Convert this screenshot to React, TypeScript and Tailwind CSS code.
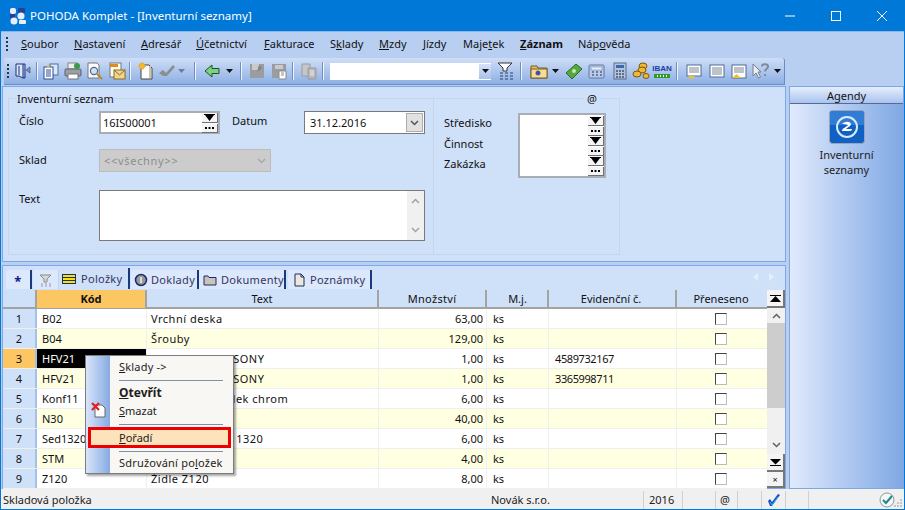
import React from "react";

const rows = [
  ["1", "B02", "Vrchní deska", "63,00", "ks", ""],
  ["2", "B04", "Šrouby", "129,00", "ks", ""],
  ["3", "HFV21", "Hi-Fi soustava SONY", "1,00", "ks", "4589732167"],
  ["4", "HFV21", "Hi-Fi soustava SONY", "1,00", "ks", "3365998711"],
  ["5", "Konf11", "Konferenč. stolek chrom", "6,00", "ks", ""],
  ["6", "N30", "Noha 30", "40,00", "ks", ""],
  ["7", "Sed1320", "Sedací sestava 1320", "6,00", "ks", ""],
  ["8", "STM", "Stůl", "4,00", "ks", ""],
  ["9", "Z120", "Židle Z120", "8,00", "ks", ""],
];

const menu = [
  ["w-[53px]", "S", "oubor", ""],
  ["w-[67px]", "N", "astavení", ""],
  ["w-[55px]", "A", "dresář", ""],
  ["w-[68px]", "Ú", "četnictví", ""],
  ["w-[66px]", "F", "akturace", ""],
  ["w-[49px]", "S", "klady", "k"],
  ["w-[44px]", "M", "zdy", ""],
  ["w-[40px]", "J", "ízdy", ""],
  ["w-[57px]", "Maje", "ek", "t"],
  ["w-[58px]", "Z", "áznam", "b"],
  ["w-[60px]", "Náp", "věda", "o"],
];

const Caret = ({ className = "" }: { className?: string }) => (
  <svg width="7" height="4" viewBox="0 0 7 4" className={className}>
    <path d="M0 0h7L3.500 4z" fill="#111" />
  </svg>
);

const Sep = ({ className = "" }: { className?: string }) => (
  <div className={`w-[2px] h-[18px] border-l border-[#6f8fc4] bg-white/80 ${className}`} />
);

const Ic = ({ className = "", children }: { className?: string; children: React.ReactNode }) => (
  <svg width="18" height="18" viewBox="0 0 18 18" className={`shrink-0 ${className}`}>
    {children}
  </svg>
);

const Toolbar = () => (
  <div className="ml-[3px] w-[781px] h-[27px] flex items-center rounded-t-[3px] bg-gradient-to-b from-[#cfdef7] to-[#8eafe3] border-b border-r border-[#6c8cc4]">
    <div className="ml-[3px] w-[3px] h-[14px] border-l-2 border-dotted border-[#26364f]" />
    <Ic className="ml-[4px]">
      <path d="M2 2h7v14l-4-2H2z" fill="#dbe6f8" stroke="#1c2f7a" />
      <path d="M5 4v9M9 2h2v14H9" fill="none" stroke="#1c2f7a" />
      <path d="M12 8l4-3v6z" fill="#6f8fd6" stroke="#445" strokeWidth=".6" />
    </Ic>
    <Sep className="ml-[4px]" />
    <Ic className="ml-[4px]">
      <rect x="8" y="2" width="8" height="11" fill="#dce8f8" stroke="#4a6fa8" />
      <rect x="2" y="5" width="9" height="12" fill="#fff" stroke="#2b4f96" />
      <path d="M4 8h5M4 10h5M4 12h5M4 14h5" stroke="#2b4f96" />
      <path d="M6 2l2 3-3 1z" fill="#f2c230" />
    </Ic>
    <Ic className="ml-[4px]">
      <rect x="4" y="1" width="9" height="6" fill="#eee" stroke="#888" />
      <rect x="1" y="7" width="16" height="7" rx="1" fill="#9a9fa6" stroke="#5c6066" />
      <rect x="4" y="12" width="10" height="5" fill="#fff" stroke="#777" />
      <circle cx="13" cy="4" r="3" fill="#3b9a4a" />
    </Ic>
    <Ic className="ml-[4px]">
      <path d="M2 1h9l2 2v13H2z" fill="#fff" stroke="#777" />
      <circle cx="8" cy="9" r="3.600" fill="#cfe0f5" stroke="#54658a" strokeWidth="1.200" />
      <path d="M11 12l5 5" stroke="#b88a20" strokeWidth="2" />
    </Ic>
    <Ic className="ml-[4px]">
      <rect x="2" y="1" width="11" height="14" fill="#fdfdf0" stroke="#777" />
      <rect x="2" y="2" width="8" height="3" fill="#e08a20" />
      <rect x="6" y="8" width="11" height="9" fill="#f1d58b" stroke="#8a6a20" />
      <path d="M6 8l5.500 5L17 8" fill="none" stroke="#8a6a20" />
    </Ic>
    <Sep className="ml-[3px]" />
    <Ic className="ml-[6px]">
      <path d="M4 3h8l3 3v11H4z" fill="#fff" stroke="#444" />
      <path d="M13 4v12" stroke="#c9c6a8" strokeWidth="2" />
      <circle cx="5" cy="4" r="3" fill="#f3b82d" stroke="#e88a1a" strokeDasharray="1 1" />
    </Ic>
    <Ic className="ml-[3px]">
      <path d="M1 11l4-3 3 3 7-8 2 2-8 9H5z" fill="#8c8e92" />
    </Ic>
    <Caret className="ml-[2px] opacity-40" />
    <Sep className="ml-[9px]" />
    <Ic className="ml-[7px]">
      <path d="M2 9l7-6v3.500h7v5H9V15z" fill="#7fd07f" stroke="#14552a" />
    </Ic>
    <Caret className="ml-[5px]" />
    <Sep className="ml-[7px]" />
    <Ic className="ml-[6px]">
      <path d="M2 2h14v14H2z" fill="#9a9c9f" />
      <path d="M4 2h7v6H4z" fill="#c9cacc" />
      <path d="M11 3l3 3-5 4z" fill="#808285" />
    </Ic>
    <Ic className="ml-[4px]">
      <path d="M2 2h14v14H2z" fill="#9a9c9f" />
      <path d="M5 3h8v4H5z" fill="#c9cacc" />
      <path d="M9 9h7v8H9z" fill="#fff" stroke="#8a8c8f" />
      <path d="M11 11h3M11 13h3" stroke="#8a8c8f" />
    </Ic>
    <Sep className="ml-[4px]" />
    <Ic className="ml-[6px]">
      <path d="M2 2h8v12H2z" fill="#c4c6c9" stroke="#9a9c9f" />
      <path d="M8 6h8v11H8z" fill="#b4b6b9" stroke="#9a9c9f" />
      <path d="M10 9h4M10 11h4M10 13h4" stroke="#eee" />
    </Ic>
    <Sep className="ml-[4px]" />
    <div className="ml-[6px] w-[161px] h-[17px] bg-white flex justify-end">
      <div className="w-[12px] h-[15px] mt-px bg-gradient-to-b from-[#d5e2f8] to-[#a9c2ec] flex items-center justify-center">
        <Caret />
      </div>
    </div>
    <Ic className="ml-[6px]">
      <path d="M1 1h14L10 6v3H6V6z" fill="#fff" stroke="#333" />
      <path d="M3 11h3M8 11h3M13 11h3M3 14h3M8 14h3M13 14h3M3 17h3M8 17h3M13 17h3" stroke="#27406e" />
    </Ic>
    <Sep className="ml-[5px]" />
    <Ic className="ml-[8px]">
      <path d="M1 4h6l1 2h9v10H1z" fill="#e2bf70" stroke="#7a5c1e" />
      <rect x="1" y="7" width="16" height="9" fill="#f2dd9a" stroke="#7a5c1e" />
      <circle cx="8" cy="11" r="2.500" fill="#3150c8" strokeDasharray="1 1" stroke="#f4b21d" />
    </Ic>
    <Caret className="ml-[4px]" />
    <Ic className="ml-[6px]">
      <path d="M1 11l10-9 6 5-10 10z" fill="#55a83e" stroke="#2d6a20" />
      <circle cx="9" cy="9" r="2" fill="#c6e8b0" />
    </Ic>
    <Ic className="ml-[5px]">
      <rect x="1" y="3" width="15" height="13" rx="1" fill="#b9cbe8" stroke="#60789e" />
      <rect x="3" y="5" width="11" height="3" fill="#e7effb" stroke="#60789e" strokeWidth=".5" />
      <path d="M4 10h2M8 10h2M12 10h2M4 13h2M8 13h2M12 13h2" stroke="#4a6690" strokeWidth="1.500" />
    </Ic>
    <Ic className="ml-[5px]">
      <rect x="3" y="1" width="12" height="16" fill="#b4c4dc" stroke="#5a6c88" />
      <rect x="5" y="3" width="8" height="3" fill="#3c68b0" />
      <path d="M5 9h2M8 9h2M11 9h2M5 12h2M8 12h2M11 12h2M5 15h2M8 15h2M11 15h2" stroke="#3c5274" strokeWidth="1.500" />
    </Ic>
    <Ic className="ml-[3px]">
      <ellipse cx="11" cy="4" rx="4" ry="3" fill="#f2b92c" stroke="#7a5510" />
      <ellipse cx="10" cy="8" rx="4" ry="3" fill="#f2b92c" stroke="#7a5510" />
      <ellipse cx="5" cy="12" rx="4" ry="3" fill="#f2b92c" stroke="#7a5510" />
      <ellipse cx="14" cy="14" rx="3" ry="2.500" fill="#f2b92c" stroke="#7a5510" />
    </Ic>
    <div className="ml-[3px] w-[18px] flex flex-col items-center">
      <span className="text-[8px] leading-[10px] font-bold text-[#1d3fa8] font-['Liberation_Sans',sans-serif]">IBAN</span>
      <div className="w-[16px] h-[4px] bg-[repeating-linear-gradient(90deg,#2f9a22_0,#2f9a22_2px,#fff_2px,#fff_3px)] border border-[#2f9a22]" />
    </div>
    <Sep className="ml-[5px]" />
    <Ic className="ml-[7px]">
      <rect x="2" y="3" width="14" height="11" fill="#fff" stroke="#516a92" />
      <path d="M4 6h10M4 8h10M4 10h10" stroke="#7b8797" />
      <path d="M3 14h7l-3.500 3.500z" fill="#e8c22e" />
    </Ic>
    <Ic className="ml-[5px]">
      <rect x="2" y="3" width="14" height="12" fill="#fff" stroke="#516a92" />
      <path d="M4 6h10M4 8h10M4 10h10M4 12h10" stroke="#7b8797" />
    </Ic>
    <Ic className="ml-[4px]">
      <rect x="2" y="3" width="14" height="13" fill="#fff" stroke="#516a92" />
      <path d="M4 6h10M4 8h10M4 10h10" stroke="#7b8797" />
      <path d="M2 16h9l-4.500-4z" fill="#e8c22e" />
    </Ic>
    <Ic className="ml-[4px]">
      <path d="M1 2l8 8H6l2.500 5-2 1-2.500-5-3 3z" fill="#e9ecf1" stroke="#74808f" />
      <path d="M10 4.500c0-3 6-3 6 0 0 2.500-3 2.500-3 5M13 12v2" fill="none" stroke="#7c8a9c" strokeWidth="2" />
    </Ic>
    <Caret className="ml-[4px]" />
  </div>
);

const Spin = () => (
  <div className="flex flex-col w-[16px] gap-px">
    <div className="h-[10px] bg-[#f4f4f4] border-r border-b border-[#707070] flex items-center justify-center">
      <svg width="11" height="7" viewBox="0 0 11 7"><path d="M0 0h11v1H0zM1 1h9L5.500 7z" fill="#000" /></svg>
    </div>
    <div className="h-[9px] bg-[#f4f4f4] border-r border-b border-[#707070] flex items-center justify-center">
      <svg width="9" height="2" viewBox="0 0 9 2"><path d="M0 0h2v2H0zM3.500 0h2v2h-2zM7 0h2v2H7z" fill="#000" /></svg>
    </div>
  </div>
);

const Chevron = ({ up, color = "#8a8a8a" }: { up?: boolean; color?: string }) => (
  <svg width="9" height="6" viewBox="0 0 9 6">
    <path d={up ? "M1 5l3.500-3.500L8 5" : "M1 1l3.500 3.500L8 1"} fill="none" stroke={color} strokeWidth="1.500" />
  </svg>
);

const Form = () => (
  <div className="h-[176px] ml-[1px] border border-[#7da7e5] bg-[#cfe0f9] pl-[5px] pt-[11px] flex">
    {/* levý blok */}
    <div className="relative w-[426px] h-[157px] border border-[#c6d5ea] pl-[10px] pt-[12px]">
      <span className="absolute left-[7px] -top-[8px] px-[1px] bg-[#cfe0f9]">Inventurní seznam</span>
      <div className="flex">
        <span className="w-[80px] pt-[2px]">Číslo</span>
        <div className="w-[121px] h-[23px] bg-white border-2 border-[#a9adb5] flex items-center justify-between pl-[2px]">
          <span>16IS00001</span>
          <Spin />
        </div>
        <span className="ml-[12px] w-[72px] pt-[2px]">Datum</span>
        <div className="w-[121px] h-[23px] bg-white border border-[#7a7a7a] flex items-center justify-between pl-[5px]">
          <span>31.12.2016</span>
          <div className="w-[17px] h-[19px] mr-px bg-[#e1e1e1] border border-[#adadad] flex items-center justify-center">
            <Chevron color="#555" />
          </div>
        </div>
      </div>
      <div className="flex mt-[15px]">
        <span className="w-[80px] pt-[3px]">Sklad</span>
        <div className="w-[172px] h-[23px] bg-[#cccccc] border border-[#bcbcbc] flex items-center justify-between pl-[4px] pr-[4px]">
          <span className="text-[#8d8d8d] tracking-[.7px]">&lt;&lt;všechny&gt;&gt;</span>
          <Chevron color="#a8a8a8" />
        </div>
      </div>
      <div className="flex mt-[18px]">
        <span className="w-[80px] pt-[1px]">Text</span>
        <div className="w-[326px] h-[51px] bg-white border border-[#7a7a7a] flex justify-end">
          <div className="w-[17px] bg-[#f0f0f0] flex flex-col items-center justify-between py-[7px]">
            <Chevron up color="#a3a3a3" />
            <Chevron color="#a3a3a3" />
          </div>
        </div>
      </div>
    </div>
    {/* pravý blok */}
    <div className="relative w-[186px] h-[157px] border border-l-0 border-[#c6d5ea] pl-[10px] pt-[14px] flex">
      <span className="absolute right-[19px] -top-[8px] px-[3px] bg-[#cfe0f9]">@</span>
      <div className="w-[74px] flex flex-col gap-[3.500px] mt-[1px]">
        <span className="leading-[17px]">Středisko</span>
        <span className="leading-[17px]">Činnost</span>
        <span className="leading-[17px]">Zakázka</span>
      </div>
      <div className="w-[88px] h-[65px] bg-white border-2 border-[#a9adb5] flex justify-end items-start pt-px">
        <div className="flex flex-col">
          <Spin />
          <Spin />
          <Spin />
        </div>
      </div>
    </div>
  </div>
);

const TabIcon = ({ children }: { children: React.ReactNode }) => (
  <svg width="14" height="14" viewBox="0 0 14 14" className="shrink-0">{children}</svg>
);

const Tabs = () => (
  <div className="h-[24px] flex items-end pl-[3px] pb-px text-[#33355f] tracking-[.3px] relative">
    <div className="w-[26px] h-[19px] bg-[#dce8fb] border-r-2 border-[#1b3a7c] rounded-tl flex items-center justify-center text-[#101a8c]">
      <span className="text-[13px] leading-none font-bold pt-[3px]">*</span>
    </div>
    <div className="w-[26px] h-[19px] ml-px bg-[#dce8fb] border-r border-[#c3d2ea] flex items-center justify-center">
      <TabIcon>
        <path d="M1 2h11L8 6v3H5V6z" fill="#d8d8d8" stroke="#8a8a8a" />
        <path d="M2 11h2M6 11h2M10 11h2M2 13h2M6 13h2M10 13h2" stroke="#9a9a9a" />
      </TabIcon>
    </div>
    <div className="w-[71px] h-[21px] bg-[#cfe0f9] border-r-2 border-[#1b3a7c] flex items-center pl-[3px] gap-[5px]">
      <TabIcon>
        <rect x="0.500" y="2.500" width="13" height="9" fill="#f7e400" stroke="#1b2a6c" />
        <path d="M0 5.500h13M0 8.500h13" stroke="#1b2a6c" />
      </TabIcon>
      <span>Položky</span>
    </div>
    <div className="w-[68px] h-[19px] ml-px bg-[#dce8fb] border-r-2 border-[#1b3a7c] flex items-center pl-[3px] gap-[3px]">
      <TabIcon>
        <circle cx="7" cy="7" r="5.500" fill="#9a9a9a" stroke="#1b2a6c" strokeWidth="1.500" />
        <rect x="6" y="4" width="2" height="6" fill="#ddd" />
      </TabIcon>
      <span>Doklady</span>
    </div>
    <div className="w-[87px] h-[19px] bg-[#dce8fb] border-r-2 border-[#1b3a7c] flex items-center pl-[4px] gap-[4px]">
      <TabIcon>
        <path d="M1 3h4l1 1.500h7V12H1z" fill="#c8c4bb" stroke="#1b2a6c" />
      </TabIcon>
      <span>Dokumenty</span>
    </div>
    <div className="w-[84px] h-[19px] ml-[2px] bg-[#dce8fb] border-r-2 border-[#1b3a7c] flex items-center pl-[5px] gap-[3px]">
      <TabIcon>
        <path d="M2 1h6l3 3v9H2z" fill="#ece9d8" stroke="#1b2a6c" />
        <path d="M8 1v3h3" fill="none" stroke="#1b2a6c" />
      </TabIcon>
      <span>Poznámky</span>
    </div>
    <div className="ml-auto mr-[11px] mb-[8px] flex gap-[11px]">
      <svg width="5" height="8" viewBox="0 0 5 8"><path d="M5 0v8L0 4z" fill="#e6eefb" /></svg>
      <svg width="5" height="8" viewBox="0 0 5 8"><path d="M0 0v8l5-4z" fill="#e6eefb" /></svg>
    </div>
  </div>
);

const cols = "grid grid-cols-[34px_110px_232px_108px_62px_128px_90px]";

const Grid = () => (
  <div className="flex flex-1 min-h-0">
    <div className="w-[764px] bg-white">
      <div className={`${cols} h-[19px] bg-[#cfe0f9] border-b-2 border-[#a3a3a3] leading-[18px] text-center`}>
        <div className="border-r-2 border-[#a3a3a3]" />
        <div className="bg-[#fcc662] font-bold border-r-2 border-[#a3a3a3]">Kód</div>
        <div className="border-r-2 border-[#a3a3a3]">Text</div>
        <div className="border-r-2 border-[#a3a3a3] tracking-[.3px]">Množství</div>
        <div className="border-r-2 border-[#a3a3a3] pl-[1px]">M.j.</div>
        <div className="border-r-2 border-[#a3a3a3] pr-[2px]">Evidenční č.</div>
        <div className="pr-[2px]">Přeneseno</div>
      </div>
      {rows.map((r, i) => (
        <div key={r[0]} className={`${cols} h-[20px] leading-[19px] border-b border-[#efefef] ${i % 2 ? "bg-[#ffffe1]" : "bg-white"}`}>
          <div className={`text-center border-r-2 border-[#a3c0ea] ${i === 2 ? "bg-[#fcc662]" : "bg-[#cfe0f9]"}`}>{r[0]}</div>
          <div className={`pl-[5px] border-r border-[#efefef] ${i === 2 ? "bg-black text-white" : ""}`}>{r[1]}</div>
          <div className="pl-[4px] border-r border-[#efefef] tracking-[.5px] whitespace-nowrap overflow-hidden">{r[2]}</div>
          <div className="pr-[3px] text-right border-r border-[#efefef]">{r[3]}</div>
          <div className="pl-[6px] border-r border-[#efefef]">{r[4]}</div>
          <div className="pl-[6px] border-r border-[#efefef] tracking-[-.4px]">{r[5]}</div>
          <div className="flex items-center justify-center pr-[3px]">
            <div className="w-[12px] h-[12px] bg-white border border-t-[#444] border-l-[#444] border-r-[#bbb] border-b-[#bbb]" />
          </div>
        </div>
      ))}
    </div>
    <div className="w-[18px] flex flex-col bg-[#f0f0f0]">
      <div className="h-[18px] bg-[#f4f4f4] border-r-2 border-b-2 border-[#777] flex items-center justify-center">
        <svg width="11" height="7" viewBox="0 0 11 7"><path d="M0 0h11v1H0zM5.500 1L11 7H0z" fill="#000" /></svg>
      </div>
      <div className="h-[15px] flex items-center justify-center"><Chevron up color="#606060" /></div>
      <div className="h-[85px] bg-[#cdcdcd]" />
      <div className="flex-1 flex items-end justify-center pb-[6px]"><Chevron color="#606060" /></div>
      <div className="h-[18px] bg-[#f4f4f4] border-r-2 border-b-2 border-[#777] flex items-center justify-center">
        <svg width="11" height="7" viewBox="0 0 11 7"><path d="M0 0h11L5.500 5.500zM0 6h11v1H0z" fill="#000" /></svg>
      </div>
      <div className="h-[16px] bg-[#f4f4f4] border-r-2 border-b-2 border-[#777] flex items-center justify-center text-[9px] leading-none">×</div>
    </div>
  </div>
);

const ContextMenu = () => (
  <div className="absolute left-[85px] top-[355px] w-[149px] h-[119px] bg-[#f8f7f3] border border-[#7c7c7c] shadow-[2px_2px_2px_rgba(0,0,0,.35)] flex">
    <div className="w-[24px] bg-gradient-to-r from-[#d8e5fa] to-[#87aae2] shrink-0 flex flex-col items-center pt-[46px]">
      <svg width="16" height="16" viewBox="0 0 16 16" className="ml-[1px]">
        <path d="M4 3h7l3 3v9H4z" fill="#fff" stroke="#666" />
        <path d="M1 1l7 7M8 1L1 8" stroke="#e02020" strokeWidth="2.200" />
      </svg>
    </div>
    <div className="flex-1 flex flex-col pt-[1px] text-[#1d1d1d]">
      <div className="h-[20px] pl-[9px] leading-[20px] tracking-[.2px]"><u>S</u>klady -&gt;</div>
      <div className="h-px bg-[#7f8ea8] ml-[9px] mr-[10px] mt-[3px]" />
      <div className="h-[19px] pl-[9px] mt-[2px] leading-[19px] font-bold text-[12px]"><u>O</u>tevřít</div>
      <div className="h-[19px] pl-[9px] leading-[17px]"><u>S</u>mazat</div>
      <div className="h-px bg-[#7f8ea8] ml-[9px] mr-[10px] mt-[3px]" />
      <div className="h-[21px] -ml-[22px] mr-[2px] mt-[2px] pl-[28px] leading-[15px] bg-[#fce3bc] border-[3px] border-[#ee0000]"><u>P</u>ořadí</div>
      <div className="h-px bg-[#7f8ea8] ml-[9px] mr-[10px] mt-[3px]" />
      <div className="h-[20px] pl-[9px] mt-[1px] leading-[20px] tracking-[.2px] whitespace-nowrap">Sdružování po<u>l</u>ožek</div>
    </div>
  </div>
);

const StatusCell = ({ className = "", children }: { className?: string; children?: React.ReactNode }) => (
  <div className={`h-full flex items-center border-r border-[#d0d0d0] shrink-0 ${className}`}>{children}</div>
);

const App = () => (
  <div className="relative w-[905px] h-[510px] overflow-hidden bg-[#0078d7] text-[11px] leading-[16px] text-[#111] font-['Noto_Sans',sans-serif] flex flex-col">
    <div className="h-[31px] flex items-center text-white shrink-0">
      <svg width="18" height="18" viewBox="0 0 18 18" className="ml-[9px]">
        <rect x="1" y="1" width="6" height="6" rx="2" fill="#e8eefb" />
        <rect x="9" y="1" width="7" height="5" rx="1" fill="#28418f" />
        <rect x="1" y="7" width="5" height="4" fill="#28418f" />
        <circle cx="12" cy="9" r="3.500" fill="#e8eefb" />
        <circle cx="5" cy="14" r="3.500" fill="#e8eefb" />
        <rect x="10" y="13" width="7" height="4" rx="1" fill="#e8eefb" />
      </svg>
      <span className="ml-[3px] text-[11.500px]">POHODA Komplet - [Inventurní seznamy]</span>
      <div className="ml-auto flex items-center">
        <svg width="46" height="30" viewBox="0 0 46 30"><path d="M18 15h10" stroke="#fff" /></svg>
        <svg width="46" height="30" viewBox="0 0 46 30"><rect x="18.500" y="10.500" width="9" height="9" fill="none" stroke="#fff" /></svg>
        <svg width="46" height="30" viewBox="0 0 46 30"><path d="M18 10l10 10M28 10L18 20" stroke="#fff" /></svg>
      </div>
    </div>
    <div className="mx-[1px] mb-[1px] flex-1 min-h-0 flex flex-col bg-[#b9cff1] border-t border-[#8fb4ea]">
      <div className="h-[26px] pb-[2px] flex items-center shrink-0">
        <div className="ml-[5px] w-[3px] h-[14px] border-l-2 border-dotted border-[#26364f]" />
        <div className="ml-[12px] flex">
          {menu.map((m) => (
            <span key={m[0] + m[1] + m[2]} className={`${m[0]} whitespace-nowrap ${m[3] === "b" ? "font-bold" : ""}`}>
              {m[3] === "k" ? (
                <>S<u>k</u>lady</>
              ) : m[3] === "t" ? (
                <>Maje<u>t</u>ek</>
              ) : m[3] === "o" ? (
                <>Náp<u>o</u>věda</>
              ) : (
                <><u>{m[1]}</u>{m[2]}</>
              )}
            </span>
          ))}
        </div>
      </div>
      <Toolbar />
      <div className="flex-1 min-h-0 flex mt-px">
        <div className="w-[785px] flex flex-col">
          <Form />
          <div className="h-[3px]" />
          <div className="flex-1 min-h-0 ml-[1px] border border-[#7da7e5] bg-[#cfe0f9] flex flex-col">
            <Tabs />
            <Grid />
          </div>
        </div>
        <div className="w-[115px] ml-[3px] border border-[#7da7e5] bg-gradient-to-r from-[#e0eafc] to-[#80a8e4] flex flex-col items-center">
          <div className="w-full h-[17px] bg-gradient-to-b from-[#e6eefc] to-[#a9c3ee] border-b border-[#566b8f] text-center leading-[17px]">Agendy</div>
          <svg width="36" height="35" viewBox="0 0 36 35" className="mt-[6px]">
            <rect x="0.500" y="0.500" width="35" height="33" rx="3" fill="#0f62c4" stroke="#9aa6b8" />
            <path d="M1 1h34v14H1z" fill="#4a8fe0" opacity=".6" />
            <circle cx="18" cy="17" r="10" fill="none" stroke="#dbe9fb" strokeWidth="2" />
            <path d="M13 14c3-3 8-3 9 0 0 2-3 3-5 5h6c0 1-1 2-2 2h-8c0-3 5-4 6-6-2-1-4-1-6-1z" fill="#fff" />
          </svg>
          <span className="mt-[2px] text-center leading-[15px] text-[#222]">Inventurní<br />seznamy</span>
        </div>
      </div>
      <div className="h-[20px] pt-[2px] bg-[#f0f0f0] flex items-center shrink-0 text-[#222]">
        <span className="pl-[2px] w-[490px] shrink-0">Skladová položka</span>
        <StatusCell className="w-[153px]">Novák s.r.o.</StatusCell>
        <StatusCell className="w-[39px] pl-[5px]">2016</StatusCell>
        <StatusCell className="w-[33px]" />
        <StatusCell className="w-[22px] pl-[4px]">@</StatusCell>
        <StatusCell className="w-[24px]" />
        <StatusCell className="w-[24px] justify-center">
          <svg width="14" height="14" viewBox="0 0 14 14">
            <path d="M1 8l2-2 2 3 6-8 2 1-8 11H3z" fill="#1f49c8" />
            <path d="M3 9l2 3 6-8" fill="none" stroke="#28c8d8" />
          </svg>
        </StatusCell>
        <StatusCell className="w-[23px]" />
        <svg width="24" height="18" viewBox="0 0 24 18" className="ml-[70px]">
          <circle cx="8" cy="9" r="7" fill="#f6f6f6" stroke="#8a9a9a" />
          <path d="M4 9l3 3 6-7" fill="none" stroke="#1a8a8a" strokeWidth="2" />
          <path d="M21 8h2v2h-2zM18 11h2v2h-2zM21 11h2v2h-2zM15 14h2v2h-2zM18 14h2v2h-2zM21 14h2v2h-2z" fill="#c4c4c4" />
        </svg>
      </div>
    </div>
    <ContextMenu />
  </div>
);

export default App;
